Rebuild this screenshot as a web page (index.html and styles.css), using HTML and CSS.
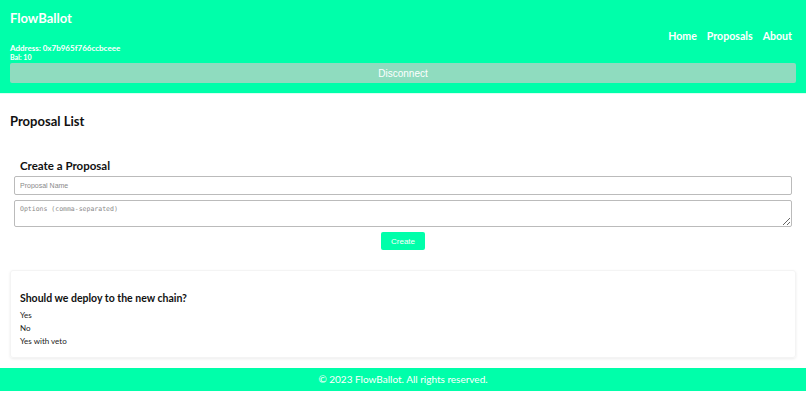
FILE: index.html
```html
<!DOCTYPE html>
<html lang="en">

<head>
    <meta charset="UTF-8">
    <meta name="viewport" content="width=device-width, initial-scale=1.0">
    <title>FlowBallot</title>

    <link rel="stylesheet" href="styles.css">
</head>

<body>
    <header class="top_bar">
        <div class="top_row">
            <div class="brand">
                <h1>FlowBallot</h1>
                <p class="addr">Address: 0x7b965f766ccbceee</p>
                <p class="bal">Bal: 10</p>
            </div>
            <nav class="nav">
                <a href="#">Home</a>
                <a href="#">Proposals</a>
                <a href="#">About</a>
            </nav>
        </div>
        <button class="btn_disconnect">Disconnect</button>
    </header>

    <main class="main">
        <h2 class="page_title">Proposal List</h2>

        <section class="create_box">
            <h3>Create a Proposal</h3>
            <input class="field" type="text" placeholder="Proposal Name">
            <textarea class="field area" placeholder="Options (comma-separated)"></textarea>
            <div class="create_row">
                <button class="btn_create">Create</button>
            </div>
        </section>

        <section class="card">
            <h3>Should we deploy to the new chain?</h3>
            <ul class="options">
                <li>Yes</li>
                <li>No</li>
                <li>Yes with veto</li>
            </ul>
        </section>
    </main>

    <footer class="footer">© 2023 FlowBallot. All rights reserved.</footer>
</body>

</html>
```

FILE: styles.css
```css
body {
    margin: 0;
    font-family: "Lato", "Noto Sans", sans-serif;
    background-color: white;
    color: #111;
}

.top_bar {
    background-color: #00ffaa;
    padding: 10px 10px 10px 10px;
    border-bottom: 1px solid #d8fff2;
}

.top_row {
    display: flex;
    justify-content: space-between;
    align-items: flex-start;
}

.brand h1 {
    margin: 0;
    font-size: 13px;
    line-height: 17px;
    color: white;
    font-weight: bold;
}

.brand .addr {
    margin: 17px 0 0 0;
    font-size: 8px;
    line-height: 9px;
    color: white;
    font-weight: bold;
}

.brand .bal {
    margin: 0;
    font-size: 7px;
    line-height: 9px;
    color: white;
    font-weight: bold;
}

.nav {
    display: flex;
    gap: 10px;
    margin-top: 20px;
    margin-right: 4px;
}

.nav a {
    color: white;
    text-decoration: none;
    font-weight: bold;
    font-size: 10.6px;
}

.btn_disconnect {
    display: block;
    width: 100%;
    height: 20px;
    margin-top: 1px;
    border: none;
    border-radius: 2px;
    background-color: #8fdcbf;
    color: white;
    font-family: "Liberation Sans", Arial, sans-serif;
    font-size: 10px;
}

.main {
    padding: 0 10px;
}

.page_title {
    margin: 0;
    padding-top: 19px;
    font-size: 13px;
    line-height: 17px;
    font-weight: bold;
}

.create_box {
    padding: 29px 4px 0 4px;
}

.create_box h3 {
    margin: 0 0 3px 6px;
    font-size: 11.5px;
    line-height: 14px;
    font-weight: bold;
}

.field {
    display: block;
    box-sizing: border-box;
    width: 100%;
    border: 1px solid #bbb;
    border-radius: 2px;
    padding: 0 5px;
    font-size: 7px;
    color: #333;
}

input.field {
    height: 19px;
    font-family: "Liberation Sans", Arial, sans-serif;
}

.area {
    height: 27px;
    margin-top: 5px;
    padding-top: 4px;
    font-family: "DejaVu Sans Mono", monospace;
    font-size: 6.5px;
}

.field::placeholder {
    color: #8a8a8a;
}

.create_row {
    display: flex;
    justify-content: center;
    margin-top: 5px;
}

.btn_create {
    width: 44px;
    height: 18px;
    border: none;
    border-radius: 2px;
    background-color: #00ffaa;
    color: white;
    font-family: "Liberation Sans", Arial, sans-serif;
    font-size: 8px;
}

.card {
    margin-top: 20px;
    padding: 20px 9px 9px 9px;
    border-radius: 3px;
    box-shadow: 0 1px 3px rgba(0, 0, 0, 0.08);
    border: 1px solid #f4f4f4;
}

.card h3 {
    margin: 0 0 4px 0;
    font-size: 10.5px;
    line-height: 14px;
    font-weight: bold;
}

.options {
    list-style: none;
    margin: 0;
    padding: 0;
}

.options li {
    font-size: 8px;
    line-height: 13px;
    color: #222;
}

.footer {
    margin-top: 10px;
    background-color: #00ffaa;
    color: white;
    text-align: center;
    font-size: 10px;
    line-height: 23px;
}
```
